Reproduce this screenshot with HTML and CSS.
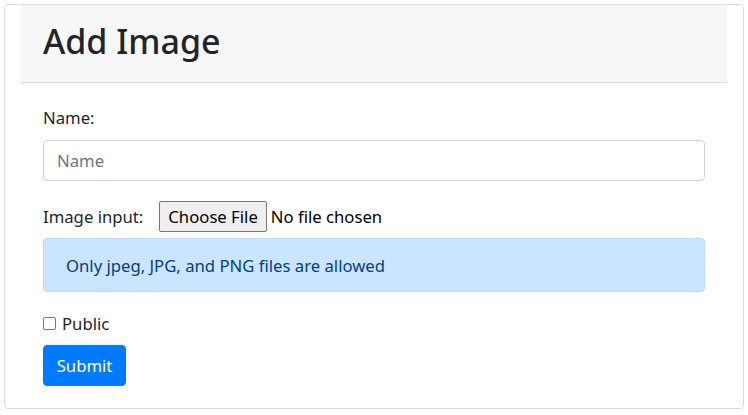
FILE: index.html
```html
<!DOCTYPE html>
<html>
<head>
<meta charset="utf-8">
<link rel="stylesheet" href="styles.css">
</head>
<body>
<div class="card">
  <div class="wrap">
    <div class="card-header">
      <h1 class="title">Add Image</h1>
    </div>
    <form class="card-body">
      <label class="label" for="name">Name:</label>
      <input class="input" id="name" type="text" placeholder="Name">
      <div class="file-row">
        <span class="file-label">Image input:</span>
        <span class="file-btn">Choose File</span>
        <span class="file-none">No file chosen</span>
      </div>
      <div class="alert">Only jpeg, JPG, and PNG files are allowed</div>
      <div class="check-row">
        <span class="checkbox"></span>
        <span class="check-label">Public</span>
      </div>
      <button class="btn" type="button">Submit</button>
    </form>
  </div>
</div>
</body>
</html>
```

FILE: styles.css
```css
* { box-sizing: border-box; }
html, body { margin: 0; padding: 0; background: #fff; }
body {
  font-family: "Noto Sans", "Open Sans", sans-serif;
  font-size: 16.7px;
  color: #212529;
}
.card {
  margin: 4px 0 0 4px;
  width: 740px;
  height: 405px;
  border: 1px solid #dcdcdc;
  border-radius: 4px;
}
.wrap {
  padding: 0 16px;
}
.card-header {
  height: 78px;
  background: #f7f7f7;
  border-bottom: 1px solid #dcdcdc;
  padding: 0 22px;
  display: flex;
  align-items: center;
}
.title {
  margin: 0;
  font-size: 34px;
  font-weight: 500;
  line-height: 1;
  color: #212529;
  position: relative;
  top: -3px;
}
.card-body {
  padding: 23px 22px 0;
  display: flex;
  flex-direction: column;
  align-items: flex-start;
}
.label {
  line-height: 24px;
}
.input {
  margin-top: 10px;
  width: 662px;
  height: 41px;
  border: 1px solid #ced4da;
  border-radius: 4px;
  padding: 0 13px;
  font-family: inherit;
  font-size: 16.7px;
  color: #495057;
}
.input::placeholder { color: #6c757d; }
.file-row {
  margin-top: 20px;
  display: flex;
  align-items: center;
  height: 31px;
}
.file-label { margin-right: 16px; }
.file-btn {
  height: 31px;
  padding: 0 8px;
  border: 1px solid #767676;
  border-radius: 2px;
  background: #efefef;
  display: flex;
  align-items: center;
  color: #000;
}
.file-none { margin-left: 4px; color: #000; }
.alert {
  margin-top: 6px;
  width: 662px;
  height: 54px;
  background: #cce5ff;
  border: 1px solid #b8daff;
  border-radius: 4px;
  color: #004085;
  padding: 0 22px;
  display: flex;
  align-items: center;
}
.check-row {
  margin-top: 19px;
  display: flex;
  align-items: center;
  height: 24px;
}
.checkbox {
  width: 13px;
  height: 13px;
  border: 1px solid #767676;
  border-radius: 2px;
  background: #fff;
  margin-right: 6px;
}
.btn {
  margin-top: 10px;
  width: 83px;
  height: 41px;
  border: 1px solid #007bff;
  border-radius: 4px;
  background: #007bff;
  color: #fff;
  font-family: inherit;
  font-size: 16.7px;
  padding: 0;
}
```
